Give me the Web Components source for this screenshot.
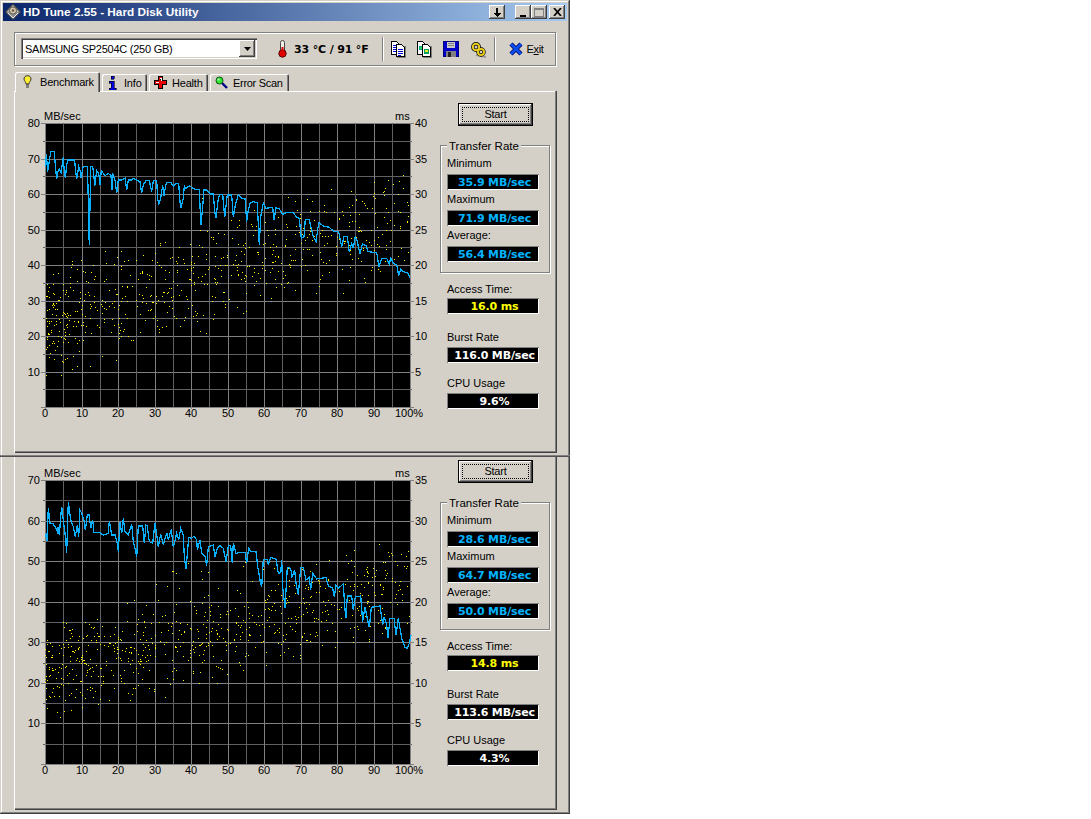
<!DOCTYPE html>
<html>
<head>
<meta charset="utf-8">
<title>HD Tune 2.55</title>
<style>
  html, body { margin: 0; background: #fff; }
  body { font: 11px "Liberation Sans", Arial, sans-serif; color: #000; }
</style>
</head>
<body>
<hd-window>
  <hd-titlebar>HD Tune 2.55 - Hard Disk Utility</hd-titlebar>
  <hd-toolbar drive="SAMSUNG SP2504C (250 GB)" temp="33 °C / 91 °F"></hd-toolbar>
  <hd-tabs></hd-tabs>
  <hd-panel style="--panel-h: 362px; --panel-top: 12px; --panel-line: #fff;">
    <hd-chart slot="chart" series="first" mb="80" ms="40"></hd-chart>
    <hd-button>Start</hd-button>
    <hd-group legend="Transfer Rate">
      <hd-readout label="Minimum" value="35.9 MB/sec"></hd-readout>
      <hd-readout label="Maximum" value="71.9 MB/sec"></hd-readout>
      <hd-readout label="Average:" value="56.4 MB/sec"></hd-readout>
    </hd-group>
    <hd-readout style="margin: 5px 0 0 7px; --label-lh: 22px" label="Access Time:" value="16.0 ms" tone="#ffff00"></hd-readout>
    <hd-readout style="margin: 13px 0 0 7px" label="Burst Rate" value="116.0 MB/sec" tone="#fff"></hd-readout>
    <hd-readout style="margin: 10px 0 0 7px" label="CPU Usage" value="9.6%" tone="#fff"></hd-readout>
  </hd-panel>
  <hd-rule></hd-rule>
  <hd-panel style="--panel-h: 353px; --panel-top: 3px; --panel-line: transparent;">
    <hd-chart slot="chart" series="second" mb="70" ms="35"></hd-chart>
    <hd-button>Start</hd-button>
    <hd-group legend="Transfer Rate">
      <hd-readout label="Minimum" value="28.6 MB/sec"></hd-readout>
      <hd-readout label="Maximum" value="64.7 MB/sec"></hd-readout>
      <hd-readout label="Average:" value="50.0 MB/sec"></hd-readout>
    </hd-group>
    <hd-readout style="margin: 5px 0 0 7px; --label-lh: 22px" label="Access Time:" value="14.8 ms" tone="#ffff00"></hd-readout>
    <hd-readout style="margin: 13px 0 0 7px" label="Burst Rate" value="113.6 MB/sec" tone="#fff"></hd-readout>
    <hd-readout style="margin: 10px 0 0 7px" label="CPU Usage" value="4.3%" tone="#fff"></hd-readout>
  </hd-panel>
</hd-window>

<script>
const FACE = "#d4d0c8";
const RAISED = "inset -1px -1px 0 #404040, inset 1px 1px 0 #fff, inset -2px -2px 0 #808080";

// curves read off the reference, [x, y] at 3x zoom from the crop origin
const SERIES = {
  first: {
    parts: [
      { ox: 0, oy: 110, pts: [137,170,139,132,143,185,150,140,152,124,163,124,164,145,170,208,172,190,178,177,184,188,188,150,190,140,192,175,196,205,200,165,204,150,224,150,226,175,230,208,236,170,240,180,243,205,248,175,250,170,262,170,264,230,266,345,268,405,270,285,272,170,278,170,282,200,284,228,290,182,296,190,300,225,304,182,315,197,325,190,333,197,336,240,338,190,345,210,350,250,355,210,365,210,375,205,380,240,385,210,395,210,400,205,420,215,425,250,430,225,438,212,448,212,455,245,460,212,470,212,473,265,476,285,482,265,488,225,492,258,497,225,500,217,512,217,520,228,530,220,536,220,540,275,543,295,550,265,553,228,558,235,568,228,585,238,598,238,601,310,603,345,608,290,612,240,620,240,630,252,640,252,645,310,648,325,655,265] },
      { ox: 210, oy: 110, pts: [30,253,38,253,44,322,52,255,65,255,70,322,76,285,85,255,95,265,105,265,110,335,115,300,120,280,130,275,142,278,146,370,148,405,152,320,160,280,168,295,188,292,192,330,198,293,208,297,218,313,232,307,250,307,258,320,268,325,274,385,282,380,286,328,298,330,310,380,318,395,326,338,340,348,358,352,372,365,386,365,395,410,402,380,412,380,418,425,425,400,430,415,436,378,442,395,450,432,457,402,468,407,474,425,500,428,507,470,515,445,530,445,538,462,542,445,550,460,560,465,566,498,572,478,580,485,595,490,600,505] }
    ],
    top: 123,
    dots: { seed: 7, n: 640, base: 200, slope: 105, spread: 50, extra: 12, high: 75, span: 50 }
  },
  second: {
    parts: [
      { ox: 0, oy: 500, pts: [137,110,139,100,141,122,145,25,150,70,160,72,168,85,172,95,175,80,178,105,183,40,185,20,190,60,195,100,200,158,205,5,212,60,220,80,226,110,232,75,236,110,240,30,245,40,252,60,256,90,262,45,268,45,272,85,278,60,282,98,300,98,310,105,325,100,328,62,335,105,345,105,352,130,355,155,360,65,365,100,370,55,375,95,385,105,395,72,400,125,405,145,410,172,415,78,428,78,433,130,438,75,442,78,448,125,458,130,465,68,475,140,482,102,490,135,500,98,505,120,514,88,520,142,530,100,536,120,542,85,550,105,553,170,558,208,566,112,575,115,582,108,590,120,592,150,600,120,605,160,615,170,620,197,625,140,640,135,645,170,652,145] },
      { ox: 210, oy: 510, pts: [30,107,40,115,48,155,55,107,62,107,67,160,70,98,78,130,90,127,105,127,110,160,116,115,122,125,138,125,143,170,150,210,155,232,160,148,172,148,175,165,182,142,198,147,205,190,212,188,215,150,218,230,225,295,232,172,242,175,246,200,254,180,258,220,265,255,272,172,280,172,288,210,298,202,302,240,308,190,320,207,330,205,348,203,355,228,368,235,373,262,378,225,385,235,400,222,405,300,408,325,412,258,425,258,430,300,436,260,452,258,458,335,465,290,475,340,478,352,484,292,510,288,518,345,523,320,530,345,534,385,540,325,552,325,558,375,565,325,575,385,585,412,592,415,598,400,603,375] }
    ],
    top: 480,
    dots: { seed: 23, n: 700, base: 192, slope: 85, spread: 46, extra: 26, high: 78, span: 30 }
  }
};

// small repeatable generator so the scatter stays the same on every run
function makeRandom(seed) {
  let s = seed * 2654435761;
  return () => {
    s = (s + 0x6d2b79f5) | 0;
    let t = Math.imul(s ^ (s >>> 15), 1 | s);
    t = (t + Math.imul(t ^ (t >>> 7), 61 | t)) ^ t;
    return ((t ^ (t >>> 14)) >>> 0) / 4294967296;
  };
}

class HdWindow extends HTMLElement {
  constructor() {
    super();
    this.attachShadow({ mode: "open" });
    this.shadowRoot.innerHTML = `
      <style>
        :host {
          display: block;
          box-sizing: border-box;
          width: 570px;
          height: 814px;
          padding-top: 3px;
          background: ${FACE};
          box-shadow: inset -1px -1px 0 #404040, inset 1px 1px 0 ${FACE}, inset -2px -2px 0 #808080, inset 2px 2px 0 #fff;
        }
      </style>
      <slot></slot>
    `;
  }
}
customElements.define("hd-window", HdWindow);

class HdTitlebar extends HTMLElement {
  constructor() {
    super();
    this.attachShadow({ mode: "open" });
    this.shadowRoot.innerHTML = `
      <style>
        :host {
          display: flex;
          align-items: center;
          height: 18px;
          margin: 0 3px;
          color: #fff;
          font: bold 11.8px "Liberation Sans", sans-serif;
          background: linear-gradient(90deg, #0a246a, #a6caf0);
        }
        .icon { margin: 0 2px 0 2px; flex: none; }
        .label { flex: 1; white-space: nowrap; }
        .btn {
          box-sizing: border-box;
          flex: none;
          width: 16px;
          height: 14px;
          background: ${FACE};
          box-shadow: ${RAISED};
          display: flex;
          align-items: center;
          justify-content: center;
        }
        .btn svg { display: block; }
      </style>
      <svg class="icon" width="16" height="16" viewBox="0 0 16 16">
        <path d="M8 0 15.5 8 8 15.5 .5 8Z" fill="#8c8c8c" stroke="#3c3c3c"/>
        <path d="M8 1.5 13.5 7.5 8 11 2.5 7.5Z" fill="#b9b9b2"/>
        <circle cx="8" cy="6.5" r="3.6" fill="#d8c4a4" stroke="#555"/>
        <circle cx="8" cy="6.5" r="1.2" fill="#555"/>
        <path d="M3 9 8 14 13 9" fill="none" stroke="#e8e8e8"/>
      </svg>
      <span class="label"><slot></slot></span>
      <div class="btn" style="margin-right: 10px"><svg width="8" height="9" viewBox="0 0 8 9" shape-rendering="crispEdges"><path d="M3 0h2v5h3L4 9 0 5h3Z"/></svg></div>
      <div class="btn"><svg width="8" height="9" viewBox="0 0 8 9" shape-rendering="crispEdges"><path d="M1 7h6v2H1Z"/></svg></div>
      <div class="btn" style="margin-right: 2px"><svg width="10" height="9" viewBox="0 0 10 9" shape-rendering="crispEdges"><path d="M.5 .5h9v8h-9Z" fill="none" stroke="#808080"/><path d="M1 1h8v1H1Z" fill="#808080"/></svg></div>
      <div class="btn" style="margin-right: 2px"><svg width="9" height="8" viewBox="0 0 9 8"><path d="M1 0 8 8M8 0 1 8" stroke="#000" stroke-width="1.7"/></svg></div>
    `;
  }
}
customElements.define("hd-titlebar", HdTitlebar);

class HdToolbar extends HTMLElement {
  constructor() {
    super();
    this.attachShadow({ mode: "open" });
    const drive = this.getAttribute("drive");
    const temp = this.getAttribute("temp");
    this.shadowRoot.innerHTML = `
      <style>
        :host {
          display: flex;
          align-items: center;
          box-sizing: border-box;
          height: 34px;
          margin: 11px 14px 0;
          padding-left: 6px;
          border: 1px solid #808080;
          box-shadow: 1px 1px 0 #fff, inset 1px 1px 0 #fff;
        }
        .combo {
          box-sizing: border-box;
          display: flex;
          align-items: center;
          justify-content: space-between;
          width: 236px;
          height: 21px;
          margin-top: -1px;
          padding: 2px;
          background: #fff;
          box-shadow: inset 1px 1px 0 #808080, inset 2px 2px 0 #404040, inset -1px -1px 0 #fff, inset -2px -2px 0 ${FACE};
        }
        .combo span { padding-left: 2px; white-space: nowrap; letter-spacing: -.25px; }
        .arrow {
          width: 16px;
          height: 17px;
          background: ${FACE};
          box-shadow: ${RAISED};
          display: flex;
          align-items: center;
          justify-content: center;
        }
        .temp { font: bold 11px "DejaVu Sans", sans-serif; margin-left: 7px; white-space: nowrap; letter-spacing: -.15px; }
        .sep { width: 1px; height: 24px; background: #808080; border-right: 1px solid #fff; }
        svg { display: block; flex: none; }
        .exit { margin-left: 4px; letter-spacing: -.4px; }
        .exit u { text-underline-offset: 1px; }
      </style>
      <div class="combo">
        <span>${drive}</span>
        <div class="arrow"><svg width="7" height="4" viewBox="0 0 7 4"><path d="M0 0h7L3.5 4Z"/></svg></div>
      </div>
      <svg style="margin-left: 21px" width="9" height="18" viewBox="0 0 9 18">
        <rect x="2.5" y=".5" width="4" height="12" rx="2" fill="#f4efe8" stroke="#444"/>
        <circle cx="4.5" cy="13.5" r="3.7" fill="#e00000" stroke="#500"/>
        <rect x="3.5" y="7" width="2" height="6" fill="#e00000"/>
      </svg>
      <span class="temp">${temp}</span>
      <div class="sep" style="margin-left: 13px"></div>
      <svg style="margin-left: 6px" width="17" height="17" viewBox="0 0 17 17" shape-rendering="crispEdges">
        <path d="M7 5h9v12H7Z" fill="#000" opacity=".4"/>
        <path d="M1.5 .5h5l3 3v10h-8Z" fill="#fff" stroke="#000"/>
        <path d="M6.5 3.500h5l3 3v9h-8Z" fill="#fff" stroke="#000"/>
        <path d="M3 4h3M3 6h3M3 8h3M3 10h3M8 8h5M8 10h5M8 12h5M8 14h3" stroke="#0000c8"/>
      </svg>
      <svg style="margin-left: 9px" width="17" height="17" viewBox="0 0 17 17" shape-rendering="crispEdges">
        <path d="M7 5h9v12H7Z" fill="#000" opacity=".4"/>
        <path d="M1.5 .5h5l3 3v10h-8Z" fill="#fff" stroke="#000"/>
        <path d="M6.5 3.500h5l3 3v9h-8Z" fill="#fff" stroke="#000"/>
        <path d="M3 5h3v4H3Z" fill="#00a0a0"/><path d="M4 6h2v2H4Z" fill="#30e030"/>
        <path d="M8 8h5v5H8Z" fill="#00a060"/><path d="M9 9h3v2H9Z" fill="#e8e820"/>
      </svg>
      <svg style="margin-left: 10px" width="17" height="17" viewBox="0 0 17 17" shape-rendering="crispEdges">
        <path d="M0 0h16v16H0Z" fill="#000080"/>
        <path d="M1 1h14v14H1Z" fill="#0000c8"/>
        <path d="M4 1h8v6H4Z" fill="#c8c8c8"/><path d="M5 2h6v1H5ZM5 4h6v1H5Z" fill="#808080"/>
        <path d="M3 10h10v6H3Z" fill="#808080"/><path d="M5 11h3v5H5Z" fill="#202020"/>
      </svg>
      <svg style="margin-left: 10px" width="17" height="17" viewBox="0 0 17 17">
        <path d="M6 14 16 16" stroke="#808080" stroke-width="2" opacity=".7"/>
        <circle cx="6" cy="6" r="3.2" fill="none" stroke="#000" stroke-width="3.4"/>
        <circle cx="11" cy="11" r="3" fill="none" stroke="#000" stroke-width="3.4"/>
        <circle cx="6" cy="6" r="3.2" fill="none" stroke="#e8cc20" stroke-width="2"/>
        <circle cx="11" cy="11" r="3" fill="none" stroke="#e8cc20" stroke-width="2"/>
      </svg>
      <div class="sep" style="margin-left: 7px"></div>
      <svg style="margin-left: 13px" width="14" height="14" viewBox="0 0 14 14">
        <path d="M2 2 12 12M12 2 2 12" stroke="#000060" stroke-width="4.4"/>
        <path d="M2 2 12 12M12 2 2 12" stroke="#0a50f0" stroke-width="2.8"/>
      </svg>
      <span class="exit">E<u>x</u>it</span>
    `;
  }
}
customElements.define("hd-toolbar", HdToolbar);

class HdTabs extends HTMLElement {
  constructor() {
    super();
    this.attachShadow({ mode: "open" });
    this.shadowRoot.innerHTML = `
      <style>
        :host {
          display: flex;
          align-items: flex-end;
          position: relative;
          z-index: 1;
          height: 19px;
          margin: 6px 0 0 15px;
          letter-spacing: -.2px;
        }
        .tab {
          box-sizing: border-box;
          display: flex;
          align-items: center;
          height: 17px;
          margin-right: 2px;
          border-radius: 2px 2px 0 0;
          box-shadow: inset 1px 1px 0 #fff, inset -1px 0 0 #404040, inset -2px 0 0 #808080;
          white-space: nowrap;
        }
        .tab svg { display: block; flex: none; }
        .active { height: 20px; margin: 0 2px -1px 0; background: ${FACE}; }
      </style>
      <div class="tab active" style="width: 85px; padding-left: 8px">
        <svg width="9" height="14" viewBox="0 0 9 14" style="margin-right: 8px">
          <path d="M4.5 .7C2 .7 1 2.500 1 4c0 2 2 3 2 5h3c0-2 2-3 2-5C8 2.500 7 .7 4.500 .7Z" fill="#ffef30" stroke="#333"/>
          <path d="M3 10h3M3 12h3" stroke="#333" stroke-width="1.200"/>
        </svg>
        Benchmark
      </div>
      <div class="tab" style="width: 45px; padding-left: 6px">
        <svg width="9" height="14" viewBox="0 0 9 14" style="margin-right: 7px" shape-rendering="crispEdges">
          <path d="M3 0h3v3H3ZM1 5h5v7h2v2H1v-2h2V7H1Z" fill="#0000e0" stroke="#000" stroke-width=".6"/>
        </svg>
        Info
      </div>
      <div class="tab" style="width: 59px; padding-left: 5px">
        <svg width="13" height="13" viewBox="0 0 13 13" style="margin-right: 5px" shape-rendering="crispEdges">
          <path d="M4.500 .5h4v4h4v4h-4v4h-4v-4h-4v-4h4Z" fill="#e80000" stroke="#000"/>
          <path d="M2 6h3M6 2h1v3" stroke="#fff"/>
        </svg>
        Health
      </div>
      <div class="tab" style="width: 79px; padding-left: 5px; letter-spacing: -.3px">
        <svg width="13" height="13" viewBox="0 0 13 13" style="margin-right: 5px">
          <path d="M7 7 12 12" stroke="#000080" stroke-width="2.400"/>
          <circle cx="4.500" cy="4.500" r="3.500" fill="#30e830" stroke="#105010"/>
          <circle cx="3.500" cy="3.500" r="1" fill="#c8ffc8"/>
        </svg>
        Error Scan
      </div>
    `;
  }
}
customElements.define("hd-tabs", HdTabs);

class HdPanel extends HTMLElement {
  constructor() {
    super();
    this.attachShadow({ mode: "open" });
    this.shadowRoot.innerHTML = `
      <style>
        :host {
          display: flex;
          align-items: flex-start;
          box-sizing: border-box;
          height: var(--panel-h);
          margin: 0 13px 0 14px;
          padding: var(--panel-top) 0 0 1px;
          box-shadow: inset 1px 0 0 #fff, inset -1px -1px 0 #404040, inset -2px -2px 0 #808080, inset 0 1px 0 var(--panel-line);
        }
        .side {
          display: flex;
          flex-direction: column;
          align-items: flex-start;
          width: 110px;
        }
      </style>
      <slot name="chart"></slot>
      <div class="side"><slot></slot></div>
    `;
  }
}
customElements.define("hd-panel", HdPanel);

class HdRule extends HTMLElement {
  constructor() {
    super();
    this.attachShadow({ mode: "open" });
    this.shadowRoot.innerHTML = `
      <style>
        :host {
          display: block;
          position: relative;
          height: 2px;
          margin-top: 2px;
          background: #808080;
          box-shadow: inset 0 -1px 0 #505050;
        }
      </style>
    `;
  }
}
customElements.define("hd-rule", HdRule);

class HdChart extends HTMLElement {
  constructor() {
    super();
    this.attachShadow({ mode: "open" });
    const data = SERIES[this.getAttribute("series")];
    const mb = Number(this.getAttribute("mb"));
    const ms = Number(this.getAttribute("ms"));
    const svg = this.plot(data, mb, ms);
    this.shadowRoot.innerHTML = `
      <style>
        :host { display: block; width: 425px; height: 320px; margin-top: 5px; }
        svg { display: block; font: 11px "Liberation Sans", sans-serif; fill: #000; }
      </style>
      ${svg}
    `;
  }

  plot(data, mb, ms) {
    const left = 30, top = 15, w = 365, h = 284;
    let out = `<rect x="${left}" y="${top}" width="${w}" height="${h}" fill="#000"/>`;

    // grid and ticks
    const rows = mb / 5;
    for (let i = 0; i <= rows; i++) {
      const y = Math.round(top + (h * i) / rows);
      const major = i % 2 === 0;
      const tick = major ? 4 : 2;
      out += `<path d="M${left - tick} ${y + 0.5}H${left + w + tick}" stroke="${major ? "#808080" : "#606060"}"/>`;
      if (major && i < rows) {
        const value = mb - i * 5;
        out += `<text x="${left - 5}" y="${y + 4}" text-anchor="end">${value}</text>`;
      }
      if (major && i < rows) {
        const value = ms - (i / 2) * 5;
        out += `<text x="${left + w + 5}" y="${y + 4}">${value}</text>`;
      }
    }
    for (let i = 0; i <= 20; i++) {
      const x = Math.round(left + (w * i) / 20);
      const major = i % 2 === 0;
      out += `<path d="M${x + 0.5} ${top}V${top + h + (major ? 2 : 0)}" stroke="${major ? "#808080" : "#606060"}"/>`;
      if (major) {
        const label = i === 20 ? "100%" : String(i * 5);
        const anchor = i === 20 ? "start" : "middle";
        const lx = i === 20 ? x - 15 : x;
        out += `<text x="${lx}" y="${top + h + 10}" text-anchor="${anchor}">${label}</text>`;
      }
    }
    out += `<text x="${left - 1}" y="${top - 3}">MB/sec</text>`;
    out += `<text x="${left + w - 15}" y="${top - 3}">ms</text>`;

    // access time scatter
    const d = data.dots;
    const rnd = makeRandom(d.seed);
    let dots = "";
    for (let i = 0; i < d.n; i++) {
      const p = Math.pow(rnd(), 1.25);
      const mid = d.base - d.slope * p;
      const y = mid + (rnd() + rnd() - 1) * d.spread * 1.2;
      dots += `M${Math.round(left + p * w)} ${Math.round(top + y)}h1v1h-1Z`;
    }
    // a few stray reads above the band
    for (let i = 0; i < d.extra; i++) {
      const p = 0.3 + rnd() * 0.68;
      const y = d.high + rnd() * d.span;
      dots += `M${Math.round(left + p * w)} ${Math.round(top + y)}h1v1h-1Z`;
    }
    out += `<path d="${dots}" fill="#ffff00"/>`;

    // transfer rate curve, page coordinates moved into the plot
    const pts = [];
    for (const part of data.parts) {
      for (let i = 0; i < part.pts.length; i += 2) {
        const x = part.ox + part.pts[i] / 3 - 45 + left;
        const y = part.oy + part.pts[i + 1] / 3 - data.top + top;
        pts.push(`${x.toFixed(1)},${y.toFixed(1)}`);
      }
    }
    out += `<polyline points="${pts.join(" ")}" fill="none" stroke="#08b0ff" stroke-width="1.250"/>`;

    return `<svg width="425" height="320" viewBox="0 0 425 320" shape-rendering="crispEdges">${out}</svg>`;
  }
}
customElements.define("hd-chart", HdChart);

class HdButton extends HTMLElement {
  constructor() {
    super();
    this.attachShadow({ mode: "open" });
    this.shadowRoot.innerHTML = `
      <style>
        :host {
          display: block;
          box-sizing: border-box;
          width: 75px;
          height: 23px;
          margin-left: 18px;
          border: 1px solid #000;
          padding: 3px;
          background: ${FACE};
          box-shadow: ${RAISED};
        }
        .focus {
          display: flex;
          align-items: center;
          justify-content: center;
          box-sizing: border-box;
          height: 100%;
          padding-bottom: 2px;
          border: 1px dotted #000;
          letter-spacing: -.2px;
        }
      </style>
      <div class="focus"><slot></slot></div>
    `;
  }
}
customElements.define("hd-button", HdButton);

class HdGroup extends HTMLElement {
  constructor() {
    super();
    this.attachShadow({ mode: "open" });
    this.shadowRoot.innerHTML = `
      <style>
        :host {
          --label-lh: 18px;
          display: block;
          position: relative;
          box-sizing: border-box;
          width: 110px;
          height: 128px;
          margin-top: 19px;
          padding: 8px 0 0 6px;
          border: 1px solid #808080;
          box-shadow: 1px 1px 0 #fff, inset 1px 1px 0 #fff;
        }
        .legend {
          position: absolute;
          top: -6px;
          left: 6px;
          padding: 0 2px;
          background: ${FACE};
          line-height: 13px;
          font-size: 11.5px;
        }
      </style>
      <span class="legend">${this.getAttribute("legend")}</span>
      <slot></slot>
    `;
  }
}
customElements.define("hd-group", HdGroup);

class HdReadout extends HTMLElement {
  constructor() {
    super();
    this.attachShadow({ mode: "open" });
    const tone = this.getAttribute("tone") || "#00b4ff";
    this.shadowRoot.innerHTML = `
      <style>
        :host { display: block; width: 92px; }
        .label { height: 20px; line-height: var(--label-lh, 20px); white-space: nowrap; }
        .value {
          box-sizing: border-box;
          height: 16px;
          padding-left: 3px;
          width: 92px;
          text-align: center;
          background: #000;
          color: ${tone};
          font: bold 11px/18px "DejaVu Sans", sans-serif;
          letter-spacing: -.15px;
          box-shadow: inset 1px 1px 0 #808080, inset -1px -1px 0 #fff;
          white-space: nowrap;
        }
      </style>
      <div class="label">${this.getAttribute("label")}</div>
      <div class="value">${this.getAttribute("value")}</div>
    `;
  }
}
customElements.define("hd-readout", HdReadout);
</script>
</body>
</html>
